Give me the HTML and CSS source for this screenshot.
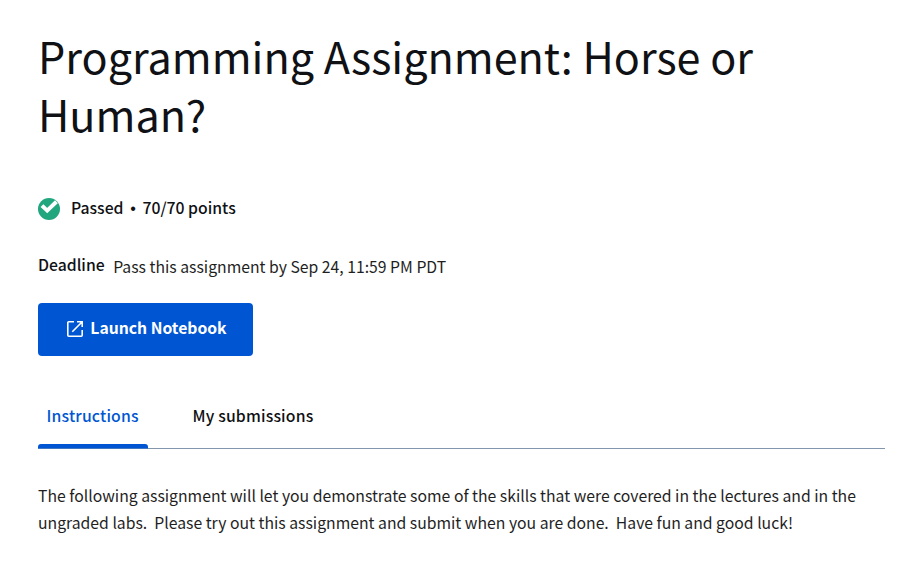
FILE: index.html
```html
<!DOCTYPE html>
<html lang="en">
<head>
<meta charset="utf-8">
<title>Programming Assignment: Horse or Human?</title>
<link rel="stylesheet" href="styles.css">
</head>
<body>
<main class="page">
  <h1 class="title">Programming Assignment: Horse or Human?</h1>
  <div class="status">
    <svg class="check" width="22" height="22" viewBox="0 0 22 22" aria-hidden="true"><circle cx="11" cy="11" r="11" fill="#21a67e"/><path d="M4 7.6 9.2 12.6 18.4 3.8" fill="none" stroke="#fff" stroke-width="4"/></svg>
    <span class="passed">Passed</span><span class="dot">•</span><span class="points">70/70 points</span>
  </div>
  <div class="deadline"><span class="label">Deadline</span><span class="due">Pass this assignment by Sep 24, 11:59 PM PDT</span></div>
  <button class="launch" type="button">
    <svg width="16" height="16" viewBox="0 0 16 16" fill="none" stroke="#fff" stroke-width="1.6" aria-hidden="true"><path d="M7 .8H1.8a1 1 0 0 0-1 1v12.4a1 1 0 0 0 1 1h12.4a1 1 0 0 0 1-1V9M10 .8h5.2V6M15 1 5.3 10.7"/></svg>
    <span class="launch-text">Launch Notebook</span>
  </button>
  <nav class="tabs"><a class="tab active">Instructions</a><a class="tab second">My submissions</a></nav>
  <p class="copy"><span class="line">The following assignment will let you demonstrate some of the skills that were covered in the lectures and in the</span> <span class="line">ungraded labs.&nbsp; Please try out this assignment and submit when you are done.&nbsp; Have fun and good luck!</span></p>
</main>
</body>
</html>
```
FILE: styles.css
```css
body{margin:0;background:#fff;color:#0f1114;font-family:"Noto Sans CJK SC",sans-serif;font-size:15.76px}
.page{padding:26px 27px 0 38px}
.title{margin:0;font-size:43.1px;line-height:58px;font-weight:400}
.status{display:flex;align-items:center;height:26px;margin-top:54px;font-weight:500}
.passed,.points{margin-top:-4px}
.passed{margin-left:11px}
.dot{width:19px;text-align:center;font:16px/20px "Liberation Sans",sans-serif}
.deadline{display:flex;gap:8.5px;height:28px;margin-top:29px;line-height:28px}
.label{font-weight:500}
.due{padding-top:2px;color:#1f1f1f}
.launch{display:flex;align-items:center;gap:8px;width:215px;height:53px;margin:24px 0 0;padding:0 0 4px 29px;border:0;border-radius:4px;background:#0056d2;color:#fff;font:700 15.72px "Noto Sans CJK SC",sans-serif}
.launch svg{margin-top:2px}
.launch-text{margin-left:-.7px}
.tabs{display:flex;height:60px;margin-top:32px;border-bottom:1px solid #8297ae;font-weight:500;font-size:15.76px;letter-spacing:.17px}
.tab{box-sizing:border-box;line-height:56px}
.active{position:relative;width:110px;height:60px;padding-left:8.5px;color:#0056d2}
.active::after{content:"";position:absolute;left:0;right:0;bottom:-1px;height:5px;background:#0056d2;border-radius:3px 3px 0 0;clip-path:inset(0 0 .5px 0)}
.second{margin-left:44.5px}
.copy{margin:33px 0 0;line-height:27px;color:#1f1f1f}
.line{display:block;white-space:nowrap}
```
